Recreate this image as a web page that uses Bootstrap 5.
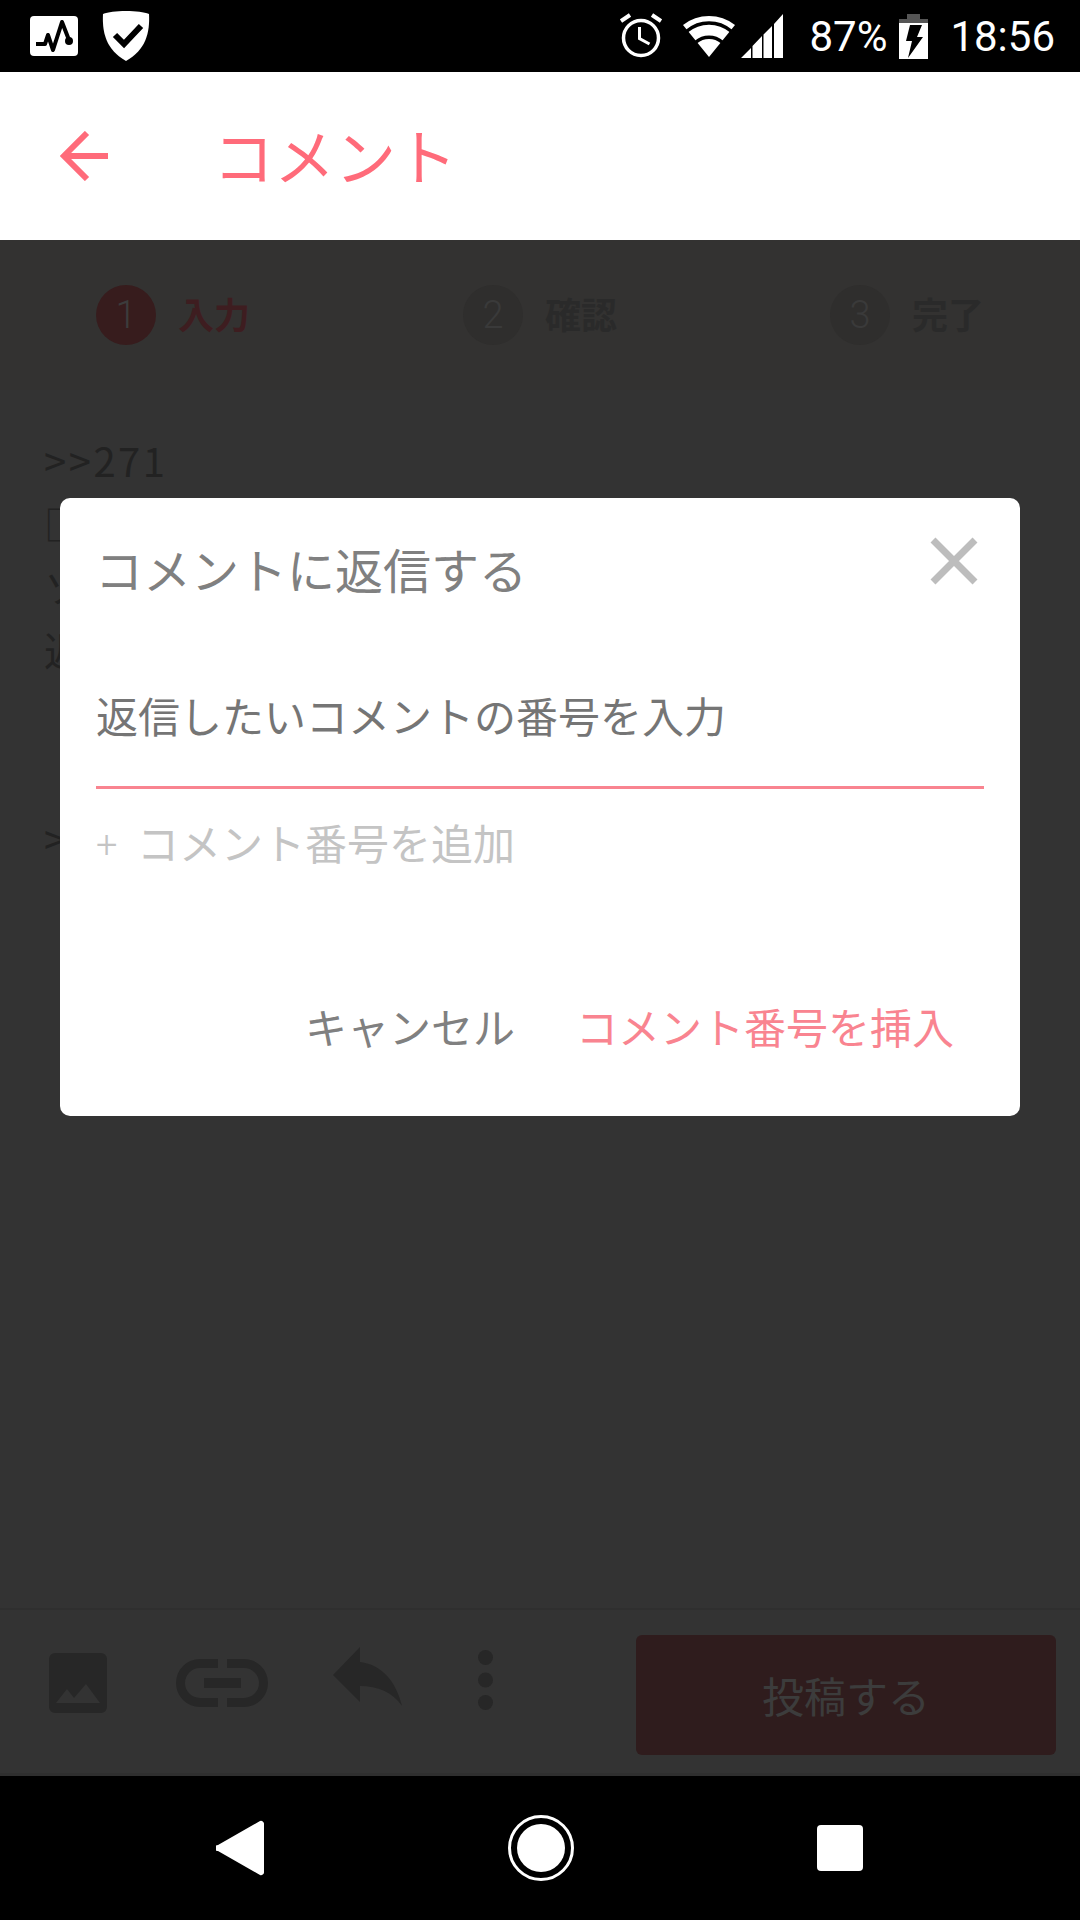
<!DOCTYPE html>
<html lang="ja">
<head>
    <meta charset="UTF-8">
    <meta name="viewport" content="width=device-width, initial-scale=1.0">
    <title>コメント</title>
    <link rel="stylesheet" href="https://cdn.jsdelivr.net/npm/bootstrap@5.3.3/dist/css/bootstrap.min.css">
    <style>
        html, body { height: 1920px; }
        body {
            width: 1080px;
            font-family: "Noto Sans CJK JP", "Noto Sans", sans-serif;
            background: #333;
            overflow: hidden;
        }
        .status-bar { height: 72px; background: #000; color: #fff; padding: 0 25px 0 30px; }
        .status-text { font-family: Roboto, sans-serif; font-size: 42px; line-height: 1; padding-top: 2px; }
        .ic-alarm { margin-right: 21px; }
        .ic-wifi { margin-right: 6px; }
        .ic-signal { margin-right: 26px; }
        .ic-battery { margin: 0 22px 0 12px; }
        .app-bar { height: 168px; background: #fff; padding-left: 60px; color: #ff6b7a; }
        .app-title { font-size: 61px; line-height: 1; margin: 0 0 4px 105px; font-weight: 400; }
        .screen { height: 1536px; }
        .step-bar { height: 150px; background: #333231; padding-left: 96px; }
        .step-item { flex: 0 0 367px; }
        .step-item:last-child { flex: 0 0 auto; }
        .step-num { width: 60px; height: 60px; border-radius: 50%; background: #2f2e2d; color: #3a3a3a; font-family: Roboto, sans-serif; font-weight: 300; font-size: 38px; }
        .step-num.on { background: #371c1d; color: #3c3c3c; }
        .step-label { font-size: 36px; font-weight: 700; color: #2a2a2a; margin: 0 0 4px 22px; }
        .step-label.on { color: #3e1d20; }
        .draft { padding: 39px 44px; font-size: 40px; line-height: 63px; color: #222; letter-spacing: 2.500px; }
        .draft p { margin: 0; }
        .tool-bar { height: 168px; border-top: 2px solid #2f2f2f; border-bottom: 3px solid #2f2f2f; padding: 0 24px 0 49px; }
        .tool-bar svg { fill: #272727; }
        .ic-image { margin: 43px 69px 0 0; }
        .ic-link { margin: 49px 65px 0 0; }
        .ic-reply { margin: 37px 76px 0 0; }
        .ic-dots { margin-top: 40px; }
        .send-btn { width: 420px; height: 120px; margin-top: 25px; padding-bottom: 2px; background: #2f1c1d; color: #3c3c3c; border-radius: 6px; font-size: 42px; }
        .reply-dialog {
            position: absolute; left: 60px; top: 258px; width: 960px; height: 618px;
            background: #fff; border-radius: 10px; padding: 0 36px;
        }
        .reply-title { font-size: 48px; line-height: 1; color: #808080; margin: 46px 0 0 -1px; font-weight: 400; }
        .reply-close { position: absolute; top: 39px; right: 42px; }
        .reply-hint { font-size: 42px; line-height: 1; color: #757575; margin-top: 102px; padding-bottom: 50px; border-bottom: 3px solid #f98490; }
        .reply-add { font-size: 42px; line-height: 1; color: #c4c4c4; margin-top: 31px; }
        .reply-plus { font-size: 38px; width: 41px; font-family: Roboto, sans-serif; font-weight: 300; padding-top: 6px; }
        .reply-actions { font-size: 42px; line-height: 1; margin-top: 141px; padding-right: 30px; gap: 61px; }
        .act-cancel { color: #808080; }
        .act-insert { color: #f98490; }
        .nav-bar { height: 144px; background: #000; padding: 0 217px 0 216px; }
    </style>
</head>
<body class="d-flex flex-column">
    <div class="status-bar d-flex align-items-center">
        <svg width="48" height="44" viewBox="0 0 48 44" class="me-4">
            <rect x="0" y="2" width="48" height="40" rx="4" fill="#fff"/>
            <path d="M6 30h9l3-9 5 15 9-28 7 18" fill="none" stroke="#000" stroke-width="4" stroke-linejoin="round"/>
            <circle cx="39" cy="27" r="4" fill="#000"/>
        </svg>
        <svg width="48" height="50" viewBox="0 0 48 50">
            <path d="M24 0C14 0 6 1 1 3c-1 18 3 36 23 47C44 39 48 21 47 3 42 1 34 0 24 0z" fill="#fff"/>
            <path d="M13 24l9 9 17-18" fill="none" stroke="#000" stroke-width="6"/>
        </svg>
        <div class="ms-auto d-flex align-items-center">
            <svg class="ic-alarm" width="42" height="46" viewBox="0 0 42 46">
                <circle cx="21" cy="25" r="17.500" fill="none" stroke="#fff" stroke-width="3.500"/>
                <path d="M19.500 14v11.500l10 5.500" fill="none" stroke="#fff" stroke-width="3"/>
                <path d="M1 8L10 2M32 2l9 6" stroke="#fff" stroke-width="4"/>
            </svg>
            <svg class="ic-wifi" width="52" height="44" viewBox="0 0 52 44">
                <path d="M0 11A42 42 0 0 1 52 11L26 43z" fill="#fff"/>
                <path d="M4 17A34 34 0 0 1 48 17M13 28A20 20 0 0 1 39 28" fill="none" stroke="#000" stroke-width="3.500"/>
            </svg>
            <svg class="ic-signal" width="42" height="44" viewBox="0 0 42 44">
                <path d="M0 44L10 34V44zM11.500 44V32L21 22v22zM22.500 44V20.500L31 12v32zM33 44V10L42 0v44z" fill="#fff"/>
            </svg>
            <span class="status-text">87%</span>
            <svg class="ic-battery" width="29" height="45" viewBox="0 0 29 45">
                <path d="M8 0h13v5h8v4H0V5h8z" fill="#555"/>
                <path d="M0 9h29v36H0z" fill="#fff"/>
                <path d="M11 11h12l-5 12h6L9 44l4-17H7z" fill="#000"/>
            </svg>
            <span class="status-text">18:56</span>
        </div>
    </div>

    <div class="app-bar d-flex align-items-center">
        <svg width="48" height="50" viewBox="0 0 48 50">
            <path d="M48 25H4M27 2L4 25l23 23" fill="none" stroke="#ff6b7a" stroke-width="6"/>
        </svg>
        <h1 class="app-title">コメント</h1>
    </div>

    <div class="screen position-relative d-flex flex-column">
        <div class="step-bar d-flex align-items-center">
            <div class="step-item d-flex align-items-center"><span class="step-num on d-flex align-items-center justify-content-center">1</span><span class="step-label on">入力</span></div>
            <div class="step-item d-flex align-items-center"><span class="step-num d-flex align-items-center justify-content-center">2</span><span class="step-label">確認</span></div>
            <div class="step-item d-flex align-items-center"><span class="step-num d-flex align-items-center justify-content-center">3</span><span class="step-label">完了</span></div>
        </div>
        <div class="draft flex-grow-1">
            <p>&gt;&gt;271</p>
            <p>□</p>
            <p>ソ</p>
            <p>返</p>
            <p>&nbsp;</p>
            <p>&nbsp;</p>
            <p>&gt;</p>
        </div>
        <div class="tool-bar d-flex align-items-start">
            <svg class="ic-image" width="58" height="60" viewBox="0 0 58 60">
                <path d="M6 0h46a6 6 0 0 1 6 6v48a6 6 0 0 1-6 6H6a6 6 0 0 1-6-6V6a6 6 0 0 1 6-6zM7 50h44L37 31 25 45l-7-9z" fill-rule="evenodd"/>
            </svg>
            <svg class="ic-link" width="92" height="48" viewBox="0 0 92 48">
                <path d="M42 0H24a24 24 0 0 0 0 48h18v-9H24a15 15 0 0 1 0-30h18zM51 0h17a24 24 0 0 1 0 48H51v-9h17a15 15 0 0 0 0-30H51zM28 19h37v10H28z"/>
            </svg>
            <svg class="ic-reply" width="69" height="59" viewBox="0 0 69 59">
                <path d="M27 0L0 28l27 27V39c18 0 32 6 42 20C63 35 50 18 27 15z"/>
            </svg>
            <svg class="ic-dots" width="15" height="60" viewBox="0 0 15 60">
                <circle cx="7.500" cy="7.500" r="7.500"/><circle cx="7.500" cy="30" r="7.500"/><circle cx="7.500" cy="52.500" r="7.500"/>
            </svg>
            <div class="send-btn ms-auto d-flex align-items-center justify-content-center">投稿する</div>
        </div>
        <div class="reply-dialog">
            <h2 class="reply-title">コメントに返信する</h2>
            <svg class="reply-close" width="48" height="48" viewBox="0 0 48 48">
                <path d="M3 3l42 42M45 3L3 45" stroke="#bdbdbd" stroke-width="7"/>
            </svg>
            <div class="reply-hint">返信したいコメントの番号を入力</div>
            <div class="reply-add d-flex align-items-center"><span class="reply-plus">+</span><span>コメント番号を追加</span></div>
            <div class="reply-actions d-flex justify-content-end">
                <span class="act-cancel">キャンセル</span>
                <span class="act-insert">コメント番号を挿入</span>
            </div>
        </div>
    </div>

    <div class="nav-bar d-flex align-items-center justify-content-between">
        <svg width="48" height="56" viewBox="0 0 48 56"><path d="M44 1a3 3 0 0 1 4 3v48a3 3 0 0 1-4 3L2 31a3 3 0 0 1 0-6z" fill="#fff"/></svg>
        <svg width="66" height="66" viewBox="0 0 66 66"><circle cx="33" cy="33" r="31.500" fill="none" stroke="#fff" stroke-width="3"/><circle cx="33" cy="33" r="24" fill="#fff"/></svg>
        <svg width="46" height="46" viewBox="0 0 46 46"><rect width="46" height="46" rx="4" fill="#fff"/></svg>
    </div>
    <script src="https://cdn.jsdelivr.net/npm/bootstrap@5.3.3/dist/js/bootstrap.bundle.min.js"></script>
</body>
</html>
